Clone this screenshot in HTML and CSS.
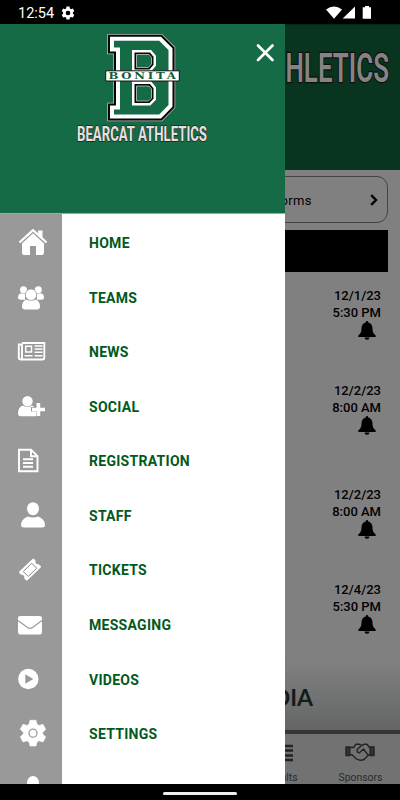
FILE: index.html
```html
<!DOCTYPE html>
<html lang="en">

<head>
    <meta charset="UTF-8">
    <meta name="viewport" content="width=device-width, initial-scale=1.0">
    <title>Bearcat Athletics</title>
    <link rel="stylesheet" href="styles.css">
</head>

<body>
    <div class="phone">
        <!-- Status bar -->
        <div class="status-bar">
            <span class="clock">12:54</span>
            <svg class="status-gear" width="14" height="14" viewBox="0 0 24 24"><path fill="#fff" fill-rule="evenodd" d="M9.5 1h5l.7 3.200 2 1.200 3.100-1 2.500 4.300-2.400 2.200v2.300l2.400 2.200-2.500 4.300-3.100-1-2 1.200-.7 3.300h-5l-.7-3.300-2-1.200-3.100 1-2.500-4.300 2.400-2.200v-2.300L1.200 8.700l2.500-4.300 3.100 1 2-1.200zM12 8a4 4 0 1 0 0 8 4 4 0 0 0 0-8z"/></svg>
            <svg class="status-icons" width="48" height="14" viewBox="0 0 48 14">
                <path fill="#fff" d="M0 3.500Q8 -2.500 16 3.500L8 12.700z"/>
                <path fill="#fff" d="M29 .5v12H16.700z"/>
                <path fill="#fff" d="M39 0h4v1.300h2V12.700h-8.300V1.300H39z"/>
            </svg>
        </div>

        <div class="screen">
            <!-- Home page, dimmed while the menu is open -->
            <div class="page">
                <div class="page-header">
                    <svg width="160" height="70" viewBox="0 0 160 70">
                        <text class="page-title" x="45.500" y="46.500" textLength="103.500" lengthAdjust="spacingAndGlyphs">HLETICS</text>
                    </svg>
                </div>
                <div class="page-body">
                    <div class="link-box">
                        <span>Forms</span>
                        <svg width="8" height="12" viewBox="0 0 8 12"><path d="M1.200 1.200 6 6 1.200 10.800" fill="none" stroke="#000" stroke-width="2.400"/></svg>
                    </div>
                    <div class="section-bar"></div>
                    <div class="event event-1">
                        <div>12/1/23</div>
                        <div>5:30 PM</div>
                        <svg class="bell" width="18" height="19" viewBox="0 0 18 19"><path d="M9 0c.8 0 1.200.6 1.200 1.400 3 .7 4.300 3 4.300 6 0 3.600.8 5 3.200 7.100v1.500H.3v-1.500c2.400-2.100 3.200-3.500 3.200-7.100 0-3 1.300-5.300 4.300-6C7.800.6 8.200 0 9 0zM6.500 16.500h5a2.500 2.200 0 0 1-5 0z"/></svg>
                    </div>
                    <div class="event event-2">
                        <div>12/2/23</div>
                        <div>8:00 AM</div>
                        <svg class="bell" width="18" height="19" viewBox="0 0 18 19"><path d="M9 0c.8 0 1.200.6 1.200 1.400 3 .7 4.300 3 4.300 6 0 3.600.8 5 3.200 7.100v1.500H.3v-1.500c2.400-2.100 3.200-3.500 3.200-7.100 0-3 1.300-5.300 4.300-6C7.800.6 8.200 0 9 0zM6.500 16.500h5a2.500 2.200 0 0 1-5 0z"/></svg>
                    </div>
                    <div class="event event-3">
                        <div>12/2/23</div>
                        <div>8:00 AM</div>
                        <svg class="bell" width="18" height="19" viewBox="0 0 18 19"><path d="M9 0c.8 0 1.200.6 1.200 1.400 3 .7 4.300 3 4.300 6 0 3.600.8 5 3.200 7.100v1.500H.3v-1.500c2.400-2.100 3.200-3.500 3.200-7.100 0-3 1.300-5.300 4.300-6C7.800.6 8.200 0 9 0zM6.500 16.500h5a2.500 2.200 0 0 1-5 0z"/></svg>
                    </div>
                    <div class="event event-4">
                        <div>12/4/23</div>
                        <div>5:30 PM</div>
                        <svg class="bell" width="18" height="19" viewBox="0 0 18 19"><path d="M9 0c.8 0 1.200.6 1.200 1.400 3 .7 4.300 3 4.300 6 0 3.600.8 5 3.200 7.100v1.500H.3v-1.500c2.400-2.100 3.200-3.500 3.200-7.100 0-3 1.300-5.300 4.300-6C7.800.6 8.200 0 9 0zM6.500 16.500h5a2.500 2.200 0 0 1-5 0z"/></svg>
                    </div>
                </div>
                <div class="sponsor-banner">MEDIA</div>
                <div class="tab-bar">
                    <div class="tab">
                        <svg width="30" height="24" viewBox="0 0 30 24"><path d="M2 4h26M2 8.500h26M2 13.500h26M2 18h26" stroke="#222" stroke-width="2.400"/></svg>
                        <span>Results</span>
                    </div>
                    <div class="tab">
                        <svg width="30" height="24" viewBox="0 0 30 24" fill="none" stroke="#222" stroke-width="1.400" stroke-linejoin="round">
                            <path d="M1 5h3.800v8.500H1zM25.200 5H29v8.500h-3.800z" fill="#333"/>
                            <path d="M5 5.500h3.500L11 2.300h3.500L16.500 3.500 19 2.300h3l2.500 3.200h.7M5 12.800h2l4.500 4.200q4 2.200 7.500.5l5-4.700h1.200M16.500 3.500l-4.300 4q-.8 3.300 2.200 3.200L18.500 7l4.500 6.200"/>
                        </svg>
                        <span>Sponsors</span>
                    </div>
                </div>
            </div>

            <!-- Slide-out menu -->
            <div class="drawer">
                <div class="drawer-header">
                    <svg width="285" height="189" viewBox="0 0 285 189">
                        <g class="letter">
                            <path stroke="#b5beb8" stroke-width="11.500" d="M113 15.700H159.700L169.500 25.500V81.500L159.700 91.500H113V84.500H119V24.500H113z"/>
                            <path stroke="#050505" stroke-width="10" d="M113 15.700H159.700L169.500 25.500V81.500L159.700 91.500H113V84.500H119V24.500H113z"/>
                            <path fill="#156b45" stroke="#fff" stroke-width="6" d="M113 15.700H159.700L169.500 25.500V81.500L159.700 91.500H113V84.500H119V24.500H113z"/>
                            <path fill="#156b45" d="M114 16.700H159.200L168.500 26V81L159.200 90.500H114V85.500H120V23.500H114z"/>
                            <path stroke="#fff" stroke-width="9" d="M136.500 30.500H149L151.500 33.500V40L148.500 43.500H136.500zM136.500 62H149L151.500 65V74L148.500 77H136.500z"/>
                            <path stroke="#050505" stroke-width="4" d="M136.500 30.500H149L151.500 33.500V40L148.500 43.500H136.500zM136.500 62H149L151.500 65V74L148.500 77H136.500z"/>
                            <path fill="#156b45" stroke="#9fafa6" stroke-width="1" d="M136.500 30.500H149L151.500 33.500V40L148.500 43.500H136.500zM136.500 62H149L151.500 65V74L148.500 77H136.500z"/>
                        </g>
                        <path d="M105.700 46.800H179.300V57H105.700z" fill="#fff" stroke="#111" stroke-width="1"/>
                        <text class="banner-text" x="108.500" y="55.200" textLength="70" lengthAdjust="spacingAndGlyphs">BONITA</text>
                        <text class="logo-text" x="77" y="116.500" textLength="130" lengthAdjust="spacingAndGlyphs">BEARCAT ATHLETICS</text>
                        <path d="M258 21.500l14.500 14.500M272.500 21.500L258 36" stroke="#fff" stroke-width="2.700" stroke-linecap="round"/>
                    </svg>
                </div>
                <div class="menu">
                    <div class="menu-item">
                        <svg class="icon" viewBox="0 0 30 30">
                            <path d="M2.500 14.500 16 2.200l13.500 12.300" fill="none" stroke="#fff" stroke-width="2.300" stroke-linejoin="round"/>
                            <path d="M21 2.500h4.500v8L21 6.500z"/>
                            <path d="M16 5.300 27 15.500V25q0 2-2 2h-6v-9h-6v9H7q-2 0-2-2v-9.500z"/>
                        </svg>
                        <span>HOME</span>
                    </div>
                    <div class="menu-item">
                        <svg class="icon" viewBox="0 0 30 30">
                            <circle cx="6.500" cy="6.800" r="3.500"/><circle cx="21.300" cy="6.800" r="3.500"/>
                            <path d="M3 10.500h5v6.200H4Q1 16.700 1 14.500q0-3 2-4zM20 10.500h5q2 1 2 4 0 2.200-3 2.200h-4z"/>
                            <circle cx="14" cy="11.700" r="5.700" stroke="#999" stroke-width=".7"/>
                            <path d="M9 16.500q5 2.500 10 0 4 2 4 7 0 3-3 3H8q-3 0-3-3 0-5 4-7z"/>
                        </svg>
                        <span>TEAMS</span>
                    </div>
                    <div class="menu-item">
                        <svg class="icon" viewBox="0 0 30 30">
                            <path class="line" d="M5 6h22.300v14.500q0 2-2 2H4q-2.200 0-2.200-2V7.500H5v13q0 1.500-1 2"/>
                            <path class="line thin" d="M8.700 9.300h5.800v5.700H8.700zM17.500 9h8M17.500 12h8M17.500 15.200h8M7.500 18.800h8M17.500 18.800h8"/>
                        </svg>
                        <span>NEWS</span>
                    </div>
                    <div class="menu-item">
                        <svg class="icon" viewBox="0 0 30 30">
                            <circle cx="10.500" cy="9.200" r="5.200"/>
                            <path d="M6 13.500q4.500 3 9 0 1.500.7 2 1.500h-3v4.500h5v4.700H4q-3 0-3-3 0-6 5-7.700z"/>
                            <path d="M19.500 11h3.700v4.700H28v3.500h-4.800V24h-3.700v-4.800H15v-3.500h4.500z"/>
                        </svg>
                        <span>SOCIAL</span>
                    </div>
                    <div class="menu-item">
                        <svg class="icon" viewBox="0 0 30 30">
                            <path class="line" d="M2 3.700h12l6.500 6.500v15H2zM14 3.700v6.500h6.500"/>
                            <path class="line" d="M6 13.300h10M6 17h10M6 20.700h10"/>
                        </svg>
                        <span>REGISTRATION</span>
                    </div>
                    <div class="menu-item">
                        <svg class="icon" viewBox="0 0 30 30">
                            <ellipse cx="16" cy="7.700" rx="6" ry="6.500"/>
                            <path d="M4 24q0-6 7-8.500 5 2 10 0 7 2.500 7 8.500 0 2.500-3 2.500H7Q4 26.500 4 24z"/>
                        </svg>
                        <span>STAFF</span>
                    </div>
                    <div class="menu-item">
                        <svg class="icon" viewBox="0 0 30 30">
                            <path d="M15.500 4q.7-.7 1.500 0l1.500 1.500q-.7 3.500 3 3.700L23.700 11q.6.700 0 1.400L10.500 25.200q-.7.700-1.500 0l-1.700-1.700q.7-3.500-3-3.700L2.300 18q-.6-.8 0-1.500z"/>
                            <path d="M14.700 8.200l5 5-8.400 8.300-5-5z" fill="none" stroke="#888" stroke-width="1"/>
                        </svg>
                        <span>TICKETS</span>
                    </div>
                    <div class="menu-item">
                        <svg class="icon" viewBox="0 0 30 30">
                            <path d="M3.200 6h19.600Q25 6 25 8.200V22q0 2.500-2.200 2.500H3.200Q1 24.500 1 22V8.200Q1 6 3.200 6z"/>
                            <path d="M1 10.500l9.500 7q2.500 1.700 5 0l9.500-7" fill="none" stroke="#999" stroke-width="1.100"/>
                        </svg>
                        <span>MESSAGING</span>
                    </div>
                    <div class="menu-item">
                        <svg class="icon" viewBox="0 0 30 30">
                            <circle cx="11.300" cy="14" r="10.200"/>
                            <path d="M8.300 9.300v9.400l8-4.700z" fill="#999"/>
                        </svg>
                        <span>VIDEOS</span>
                    </div>
                    <div class="menu-item">
                        <svg class="icon" viewBox="0 0 30 30">
                            <path d="M13 1.300h6l1 4 2 1.200 4-1.200 2.700 5-3 3v1.700l3 3-2.700 5-4-1.200-2 1.200-1 4h-6l-1-4-2-1.200-4 1.200-2.700-5 3-3v-1.700l-3-3 2.700-5 4 1.200 2-1.200z" stroke="#fff" stroke-width=".6" stroke-linejoin="round"/>
                            <circle cx="16" cy="14.200" r="4" fill="#fff" stroke="#999" stroke-width="1.300"/>
                        </svg>
                        <span>SETTINGS</span>
                    </div>
                    <div class="menu-item">
                        <svg class="icon" viewBox="0 0 30 30">
                            <ellipse cx="16" cy="8.500" rx="6" ry="6.500"/>
                            <path d="M4 24q0-6 7-8.500 5 2 10 0 7 2.500 7 8.500z"/>
                        </svg>
                    </div>
                </div>
            </div>
        </div>

        <!-- System navigation -->
        <div class="nav-bar">
            <div class="handle"></div>
        </div>
    </div>
</body>

</html>
```
FILE: styles.css
```css
* {
    box-sizing: border-box;
}

body {
    margin: 0;
    font-family: Roboto, "Liberation Sans", sans-serif;
    background-color: #000;
}

svg {
    display: block;
    flex-shrink: 0;
}

.phone {
    display: flex;
    flex-direction: column;
    width: 400px;
    height: 800px;
    overflow: hidden;
}

.status-bar {
    display: flex;
    align-items: center;
    height: 24px;
    padding: 2px 28px 0 18px;
    color: #fff;
}

.clock {
    width: 37px;
    font-size: 14.5px;
}

.status-gear {
    margin-left: 6px;
}

.status-icons {
    margin-left: auto;
    margin-right: -2px;
}

.screen {
    position: relative;
    height: 760px;
    overflow: hidden;
}

/* Page behind the menu */
.page {
    display: flex;
    flex-direction: column;
    height: 760px;
    background-color: #808080;
    color: #000;
}

.page-header {
    display: flex;
    flex-shrink: 0;
    justify-content: flex-end;
    height: 145.5px;
    padding-top: 10px;
    background-color: #083420;
    border-top: 1px solid #062818;
}

.page-title {
    font-size: 41px;
    font-weight: 600;
    fill: #848484;
    stroke: #0c100e;
    stroke-width: 2.5px;
    paint-order: stroke;
}

.page-body {
    flex: 1;
    padding: 6.5px 12px 0;
}

.link-box {
    display: flex;
    align-items: center;
    justify-content: space-between;
    height: 47px;
    padding: 1px 9px 0 260px;
    border: 1px solid #444;
    border-radius: 11px;
    font-size: 13px;
    letter-spacing: 0.4px;
}

.section-bar {
    height: 42px;
    margin-top: 7px;
    background-color: #000;
}

.event {
    display: flex;
    flex-direction: column;
    align-items: flex-end;
    height: 95.5px;
    padding: 14.5px 7px 0 0;
    font-size: 13px;
    font-weight: 500;
    line-height: 17px;
}

.event-2 {
    height: 103.5px;
}

.event-4 {
    height: 80px;
}

.bell {
    margin-right: 5px;
}

.sponsor-banner {
    flex-shrink: 0;
    height: 70px;
    padding: 22px 87px 0 0;
    background: linear-gradient(#808080, #646666);
    color: #141c1a;
    font-family: Lato, sans-serif;
    font-size: 23px;
    font-weight: 700;
    line-height: 30px;
    text-align: right;
}

.tab-bar {
    display: flex;
    flex-shrink: 0;
    justify-content: flex-end;
    height: 54px;
    border-top: 4px solid #363636;
    background-color: #727272;
}

.tab {
    display: flex;
    flex-direction: column;
    align-items: center;
    width: 80px;
    padding-top: 8px;
    color: #2b2b2b;
    font-size: 10.4px;
    line-height: 14px;
}

.tab span {
    margin-top: 5px;
    margin-left: 1px;
}

/* Slide-out menu */
.drawer {
    position: absolute;
    top: 0;
    left: 0;
    width: 285px;
    height: 760px;
    overflow: hidden;
    background-color: #fff;
}

.drawer-header {
    height: 190px;
    background-color: #156b45;
    border-bottom: 1px solid #a0aaa5;
}

.letter {
    fill: none;
}

.banner-text {
    font-family: "DejaVu Serif", serif;
    font-size: 8.7px;
    font-weight: 700;
    letter-spacing: 2px;
    fill: #125c38;
}

.logo-text {
    font-size: 20px;
    font-weight: 700;
    fill: #e6e1e1;
    stroke: #1c2a22;
    stroke-width: 1.4px;
    paint-order: stroke;
}

.menu {
    height: 570px;
    padding-top: 1.9px;
    background: linear-gradient(to right, #999 62px, #fff 62px);
}

.menu-item {
    display: flex;
    align-items: center;
    height: 54.56px;
    padding-left: 17px;
    color: #025920;
    font-size: 14px;
    font-weight: 700;
    letter-spacing: 0.28px;
}

.menu-item span {
    margin-left: 42px;
}

.icon {
    width: 30px;
    height: 30px;
    fill: #fff;
}

.line {
    fill: none;
    stroke: #fff;
    stroke-width: 1.9px;
}

.thin {
    stroke-width: 1.5px;
}

.nav-bar {
    display: flex;
    align-items: center;
    justify-content: center;
    height: 16px;
    padding-top: 2px;
}

.handle {
    width: 74px;
    height: 3px;
    border-radius: 2px;
    background-color: #eee;
}
```
